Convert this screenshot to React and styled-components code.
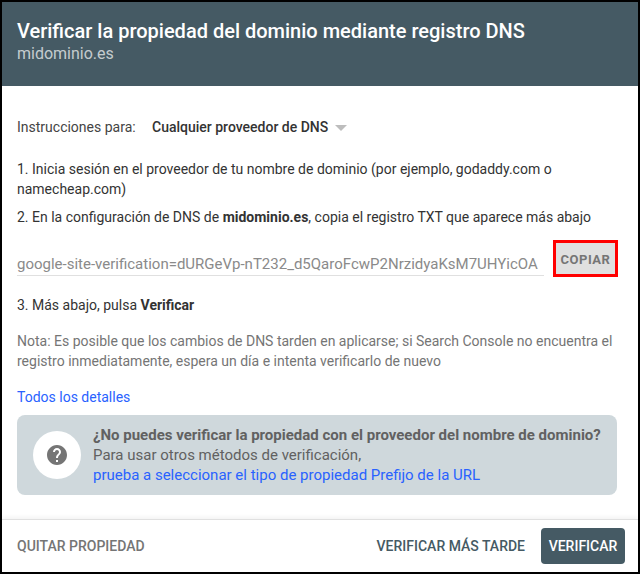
import React from "react";
import styled, { createGlobalStyle } from "styled-components";

const Global = createGlobalStyle`
  html, body { margin: 0; padding: 0; background: #fff; }
  body { font-family: Roboto, "Liberation Sans", sans-serif; }
  * { box-sizing: border-box; }
`;

const Dialog = styled.div`
  width: 640px;
  height: 574px;
  border: 2px solid #000;
  background: #fff;
  display: flex;
  flex-direction: column;
  overflow: hidden;
`;

const Header = styled.header`
  height: 84px;
  flex: none;
  background: #455a64;
  padding: 16px 15px 0;
`;

const Title = styled.h1`
  margin: 0;
  font-size: 20px;
  line-height: 26px;
  font-weight: 500;
  color: #fff;
`;

const Subtitle = styled.div`
  font-size: 16px;
  line-height: 20px;
  color: rgba(255, 255, 255, 0.7);
`;

const Body = styled.main`
  flex: 1;
  padding: 31px 15px 0;
  font-size: 14px;
  line-height: 20px;
  color: #3c4043;
`;

const ProviderRow = styled.div`
  display: flex;
  align-items: center;
  height: 20px;
`;

const ProviderLabel = styled.span`
  width: 135px;
  color: #444;
`;

const ProviderValue = styled.span`
  font-weight: 500;
  color: #333;
`;

const Caret = styled.span`
  width: 0;
  height: 0;
  margin: 2px 0 0 7px;
  border-left: 6px solid transparent;
  border-right: 6px solid transparent;
  border-top: 6px solid #bdbdbd;
`;

const Step = styled.p`
  margin: ${(p) => p.$top || 0}px 0 0;
  color: #333;
`;

const RecordRow = styled.div`
  display: flex;
  align-items: flex-end;
  margin-top: 13px;
`;

const RecordValue = styled.div`
  width: 527px;
  height: 28px;
  margin-bottom: 1px;
  padding-top: 3px;
  line-height: 26px;
  border-bottom: 1px solid #e0e0e0;
  color: #8a8a8a;
  font-size: 15px;
  white-space: nowrap;
`;

const CopyButton = styled.button`
  width: 65px;
  height: 37px;
  margin-left: 9px;
  border: 3px solid #f00;
  padding: 1px 0 0;
  background: #e0e0e0;
  color: #757575;
  font: 700 13px Roboto, sans-serif;
  letter-spacing: 0.5px;
`;

const Note = styled.p`
  margin: 16px 0 0;
  color: #757575;
`;

const DetailsLink = styled.a`
  display: block;
  margin-top: 16px;
  color: #2962ff;
`;

const HelpBox = styled.section`
  display: flex;
  align-items: center;
  height: 80px;
  margin: 8px 6px 0 0;
  padding: 0 16px;
  gap: 12px;
  border-radius: 8px;
  background: #cfd8dc;
  font-size: 15px;
`;

const HelpCircle = styled.div`
  width: 48px;
  height: 48px;
  flex: none;
  display: flex;
  align-items: center;
  justify-content: center;
  border-radius: 50%;
  background: #fff;
`;

const HelpText = styled.div`
  color: #616161;
  white-space: nowrap;
`;

const HelpTitle = styled.div`
  font-weight: 700;
`;

const HelpLink = styled.a`
  color: #2962ff;
`;

const Footer = styled.footer`
  height: 53px;
  flex: none;
  display: flex;
  align-items: center;
  justify-content: space-between;
  padding: 0 13px 0 15px;
  border-top: 1px solid #e0e0e0;
  box-shadow: 0 -2px 4px rgba(0, 0, 0, 0.05);
`;

const TextAction = styled.button`
  border: 0;
  padding: 0;
  background: none;
  font: 500 14px Roboto, sans-serif;
  color: ${(p) => p.$color};
`;

const FooterActions = styled.div`
  display: flex;
  align-items: center;
  gap: 16px;
`;

const PrimaryButton = styled.button`
  width: 84px;
  height: 36px;
  border: 0;
  border-radius: 4px;
  padding: 0;
  background: #455a64;
  color: #fff;
  font: 500 14px Roboto, sans-serif;
`;

const QuestionIcon = () => (
  <svg width="24" height="24" viewBox="0 0 24 24" fill="#757575">
    <path d="M12 2C6.48 2 2 6.48 2 12s4.48 10 10 10 10-4.48 10-10S17.52 2 12 2zm1 17h-2v-2h2v2zm2.07-7.75l-.9.92C13.45 12.9 13 13.5 13 15h-2v-.5c0-1.1.45-2.1 1.17-2.83l1.24-1.26c.37-.36.59-.86.59-1.41 0-1.1-.9-2-2-2s-2 .9-2 2H8c0-2.21 1.79-4 4-4s4 1.79 4 4c0 .88-.36 1.68-.93 2.25z" />
  </svg>
);

export default function App() {
  return (
    <>
      <Global />
      <Dialog>
        <Header>
          <Title>Verificar la propiedad del dominio mediante registro DNS</Title>
          <Subtitle>midominio.es</Subtitle>
        </Header>
        <Body>
          <ProviderRow>
            <ProviderLabel>Instrucciones para:</ProviderLabel>
            <ProviderValue>Cualquier proveedor de DNS</ProviderValue>
            <Caret />
          </ProviderRow>
          <Step $top={22}>
            1. Inicia sesión en el proveedor de tu nombre de dominio (por ejemplo, godaddy.com o namecheap.com)
          </Step>
          <Step $top={8}>
            2. En la configuración de DNS de <b>midominio.es</b>, copia el registro TXT que aparece más abajo
          </Step>
          <RecordRow>
            <RecordValue>google-site-verification=dURGeVp-nT232_d5QaroFcwP2NrzidyaKsM7UHYicOA</RecordValue>
            <CopyButton>COPIAR</CopyButton>
          </RecordRow>
          <Step $top={18}>
            3. Más abajo, pulsa <b>Verificar</b>
          </Step>
          <Note>
            Nota: Es posible que los cambios de DNS tarden en aplicarse; si Search Console no encuentra el registro inmediatamente, espera un día e intenta verificarlo de nuevo
          </Note>
          <DetailsLink>Todos los detalles</DetailsLink>
          <HelpBox>
            <HelpCircle>
              <QuestionIcon />
            </HelpCircle>
            <HelpText>
              <HelpTitle>¿No puedes verificar la propiedad con el proveedor del nombre de dominio?</HelpTitle>
              <div>Para usar otros métodos de verificación,</div>
              <HelpLink>prueba a seleccionar el tipo de propiedad Prefijo de la URL</HelpLink>
            </HelpText>
          </HelpBox>
        </Body>
        <Footer>
          <TextAction $color="#757575">QUITAR PROPIEDAD</TextAction>
          <FooterActions>
            <TextAction $color="#455a64">VERIFICAR MÁS TARDE</TextAction>
            <PrimaryButton>VERIFICAR</PrimaryButton>
          </FooterActions>
        </Footer>
      </Dialog>
    </>
  );
}
